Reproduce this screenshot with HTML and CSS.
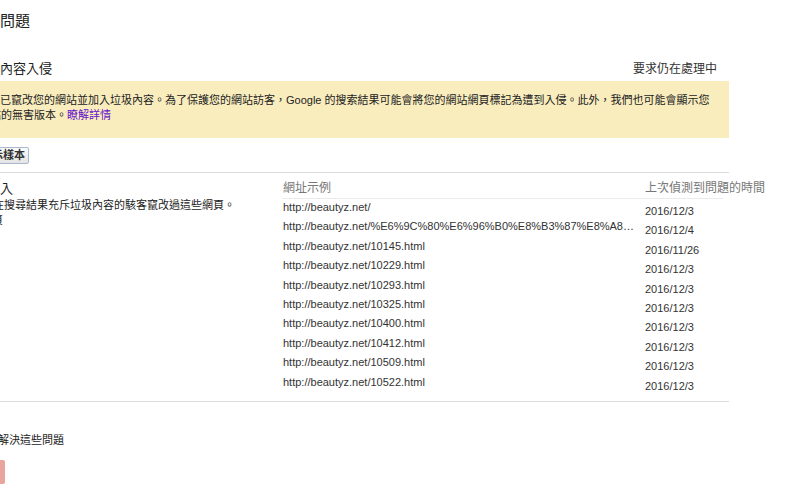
FILE: index.html
```html
<!DOCTYPE html>
<html lang="zh-Hant">
<head>
<meta charset="utf-8">
<title>安全性問題</title>
<link rel="stylesheet" href="styles.css">
</head>
<body>
<div class="page">
  <h1 class="title">問題</h1>
  <div class="sec-head">
    <h2 class="sec-title">內容入侵</h2>
    <span class="status">要求仍在處理中</span>
  </div>
  <div class="alert">
    <span class="alert-line first">已竄改您的網站並加入垃圾內容。為了保護您的網站訪客，Google 的搜索結果可能會將您的網站網頁標記為遭到入侵。此外，我們也可能會顯示您</span>
    <span class="alert-line second">網站的無害版本。<a class="link" href="#">瞭解詳情</a></span>
  </div>
  <button class="btn-sample">顯示樣本</button>
  <div class="issue">
    <div class="issue-info">
      <h3 class="issue-title">入</h3>
      <p class="issue-desc">在搜尋結果充斥垃圾內容的駭客竄改過這些網頁。</p>
      <p class="issue-count">網頁</p>
    </div>
    <div class="urls">
      <div class="th">網址示例</div>
      <div class="th th-date">上次偵測到問題的時間</div>
      <div class="url">http://beautyz.net/</div><div class="date">2016/12/3</div>
      <div class="url">http://beautyz.net/%E6%9C%80%E6%96%B0%E8%B3%87%E8%A8%8A%E6%9B%B4%E6%96%B0</div><div class="date">2016/12/4</div>
      <div class="url">http://beautyz.net/10145.html</div><div class="date">2016/11/26</div>
      <div class="url">http://beautyz.net/10229.html</div><div class="date">2016/12/3</div>
      <div class="url">http://beautyz.net/10293.html</div><div class="date">2016/12/3</div>
      <div class="url">http://beautyz.net/10325.html</div><div class="date">2016/12/3</div>
      <div class="url">http://beautyz.net/10400.html</div><div class="date">2016/12/3</div>
      <div class="url">http://beautyz.net/10412.html</div><div class="date">2016/12/3</div>
      <div class="url">http://beautyz.net/10509.html</div><div class="date">2016/12/3</div>
      <div class="url">http://beautyz.net/10522.html</div><div class="date">2016/12/3</div>
    </div>
  </div>
  <div class="fix">
    <p class="fix-title">解決這些問題</p>
    <button class="btn-review">要求審查</button>
  </div>
</div>
</body>
</html>
```

FILE: styles.css
```css
html, body {
  margin: 0;
  padding: 0;
  background: #fff;
  overflow: hidden;
}
body {
  font-family: "Liberation Sans", "Noto Sans CJK TC", sans-serif;
  color: #222;
  font-size: 11px;
}
.page {
  width: 729px;
  padding-top: 11px;
}
.title {
  margin: 0;
  font-size: 15px;
  font-weight: normal;
  line-height: 20px;
}
.sec-head {
  margin-top: 29px;
  display: flex;
  justify-content: space-between;
  align-items: center;
  height: 18px;
}
.sec-title {
  margin: 0;
  font-size: 13px;
  font-weight: normal;
  line-height: 18px;
}
.status {
  font-size: 12px;
  line-height: 18px;
  padding-right: 12px;
  color: #333;
}
.alert {
  margin-top: 3px;
  background: #f9edbe;
  height: 57px;
  box-sizing: border-box;
  padding-top: 12px;
  font-size: 11px;
  line-height: 14.5px;
  white-space: nowrap;
}
.alert-line {
  display: block;
}
.alert-line.second {
  margin-left: -21px;
}
.link {
  color: #6611cc;
  text-decoration: none;
}
.btn-sample {
  display: block;
  margin: 9px 0 0 -23px;
  height: 17px;
  padding: 0 3px;
  font-family: inherit;
  font-size: 11px;
  font-weight: bold;
  line-height: 15px;
  color: #333;
  border: 1px solid #a9b7cf;
  border-radius: 2px;
  background: linear-gradient(#fbfbfb, #e4e4e4);
}
.issue {
  margin-top: 8px;
  border-top: 1px solid #dcdcdc;
  border-bottom: 1px solid #dcdcdc;
  display: grid;
  grid-template-columns: 283px 1fr;
  padding-bottom: 8px;
}
.issue-info {
  min-width: 0;
}
.issue-title {
  margin: 8px 0 0;
  font-size: 13px;
  font-weight: normal;
  line-height: 16px;
}
.issue-desc {
  margin: 1px 0 0 -7px;
  line-height: 14px;
}
.issue-count {
  margin: 1px 0 0 -19px;
  line-height: 14px;
}
.urls {
  display: grid;
  grid-template-columns: 362px 78px;
  grid-template-rows: 26px;
  grid-auto-rows: 19.4px;
}
.th {
  height: 26px;
  box-sizing: border-box;
  padding-top: 8px;
  font-size: 12px;
  line-height: 14px;
  color: #777;
  white-space: nowrap;
  border-bottom: 1px solid #ebebeb;
}
.url {
  padding: 1px 8px 0 0;
  line-height: 14px;
  color: #333;
  white-space: nowrap;
  overflow: hidden;
  text-overflow: ellipsis;
}
.date {
  padding-top: 5px;
  line-height: 14px;
  color: #333;
  white-space: nowrap;
}
.fix {
  padding-top: 31px;
}
.fix-title {
  margin: 0 0 0 -2px;
  line-height: 14px;
}
.btn-review {
  display: block;
  margin: 13px 0 0 -60px;
  width: 65px;
  height: 24px;
  border: none;
  border-radius: 2px;
  background: #e8a49d;
  color: #fff;
  font-family: inherit;
  font-size: 11px;
  font-weight: bold;
}
```
